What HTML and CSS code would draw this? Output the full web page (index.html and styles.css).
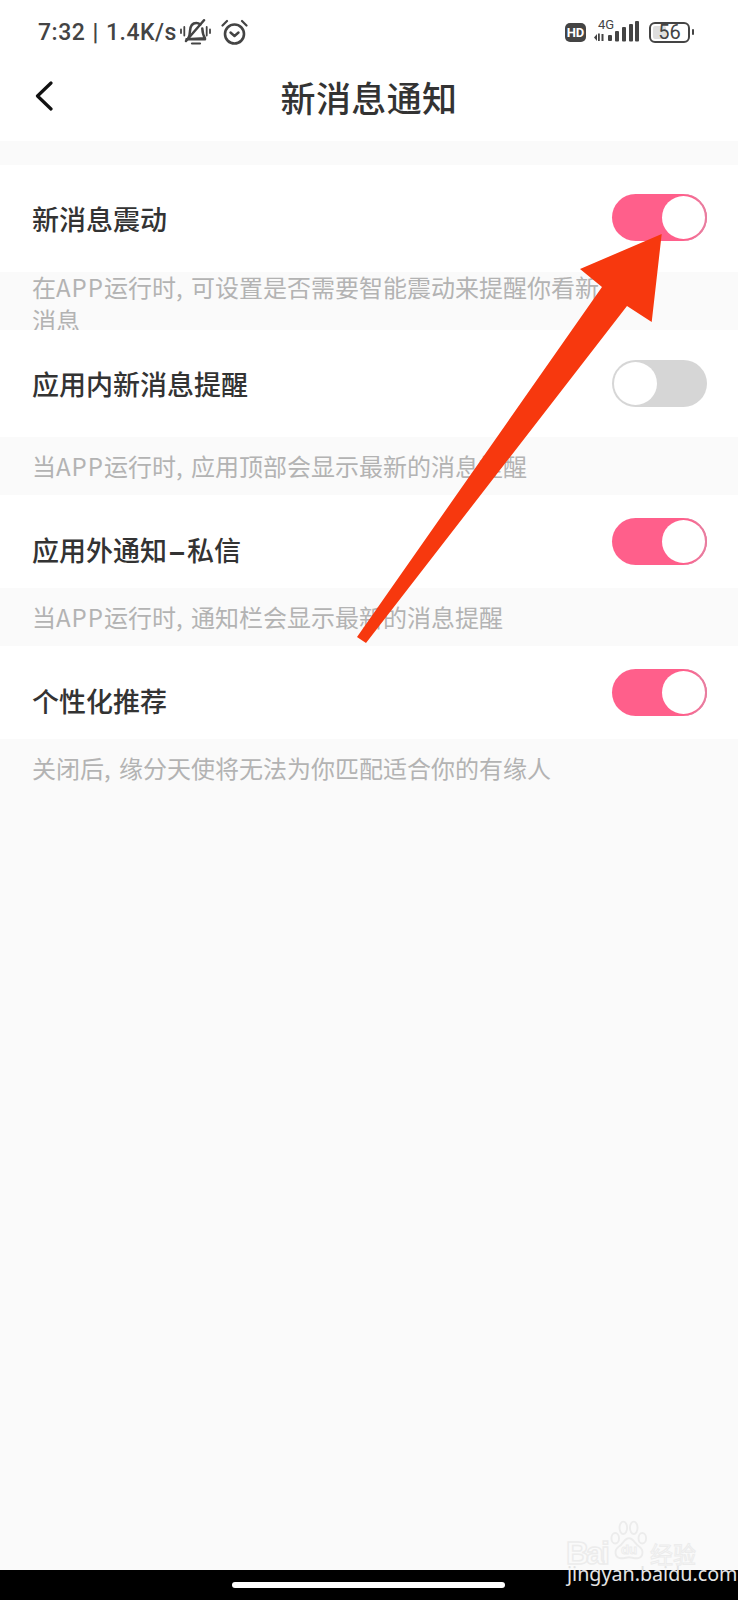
FILE: index.html
```html
<!DOCTYPE html>
<html lang="zh-CN">
<head>
<meta charset="utf-8">
<title>新消息通知</title>
<link rel="stylesheet" href="styles.css">
</head>
<body>
<div class="page">
  <header class="top">
    <div class="status">
      <div class="status-left">
        <span class="status-text">7:32 <b class="sep">|</b> 1.4K/s</span>
        <svg class="bell" viewBox="0 0 31 26" aria-hidden="true">
          <g fill="none" stroke="#444" stroke-width="2.500" stroke-linecap="round" stroke-linejoin="round">
            <path d="M8.500 19c1.200-2 1.300-4 1.500-7C10.300 7 12.800 4 16.300 4c1.600 0 3 .6 4 1.600M22.300 9.500c.2 3.500.5 6.500 2.700 9.800L6.500 20.200H25"/>
            <path d="M6 22 24 1.300"/>
            <path d="M12 24.500h8" stroke-width="2.200"/>
            <path d="M1 10.500v3.500M4.300 8v8.500M26.700 8v8.500M30 10.500v3.500" stroke-width="1.800"/>
          </g>
        </svg>
        <svg class="alarm" viewBox="0 0 27 27" aria-hidden="true">
          <g fill="none" stroke="#444" stroke-linecap="round" stroke-linejoin="round">
            <circle cx="13.500" cy="15" r="9.500" stroke-width="2.600"/>
            <path d="M9.500 13.500l4 3.500 4-3.500" stroke-width="2.400"/>
            <path d="M1.500 6.500 6 2M25.500 6.500 21 2" stroke-width="2.200"/>
          </g>
        </svg>
      </div>
      <div class="status-right">
        <span class="hd">HD</span>
        <div class="signal">
          <span class="net">4G</span>
          <svg class="bars" viewBox="0 0 45 21" aria-hidden="true">
            <g fill="#444">
              <path d="M0 16.500 3 13v7zM4 12.500h1.800V20H4z"/>
              <rect x="7.500" y="13" width="2" height="7"/>
              <rect x="14" y="14" width="4" height="6" rx="1"/>
              <rect x="21" y="10" width="4" height="10.500" rx="1"/>
              <rect x="28" y="6" width="4" height="14.500" rx="1"/>
              <rect x="35" y="3" width="4" height="17.500" rx="1"/>
              <rect x="41" y="0" width="4" height="20.500" rx="1"/>
            </g>
          </svg>
        </div>
        <div class="battery">
          <div class="battery-body"><span class="battery-fill"></span><span class="battery-num">56</span></div>
          <span class="battery-nub"></span>
        </div>
      </div>
    </div>
    <nav class="nav">
      <svg class="back" viewBox="0 0 18 30" aria-hidden="true">
        <path d="M16 2 2.500 15 16 28" fill="none" stroke="#111" stroke-width="3.200" stroke-linecap="round" stroke-linejoin="round"/>
      </svg>
      <h1 class="nav-title">新消息通知</h1>
    </nav>
  </header>

  <main class="content">
    <section class="row row-tall row-first">
      <h2 class="row-title title-first">新消息震动</h2>
      <span class="switch on"><span class="knob"></span></span>
    </section>
    <p class="note note-two"><span class="note-lines">在<span class="latin">APP</span>运行时, 可设置是否需要智能震动来提醒你看新消息</span></p>

    <section class="row row-tall">
      <h2 class="row-title">应用内新消息提醒</h2>
      <span class="switch off"><span class="knob"></span></span>
    </section>
    <p class="note">当<span class="latin">APP</span>运行时, 应用顶部会显示最新的消息提醒</p>

    <section class="row row-short">
      <h2 class="row-title title-low">应用外通知<span class="dash">-</span>私信</h2>
      <span class="switch on"><span class="knob"></span></span>
    </section>
    <p class="note">当<span class="latin">APP</span>运行时, 通知栏会显示最新的消息提醒</p>

    <section class="row row-short">
      <h2 class="row-title title-low">个性化推荐</h2>
      <span class="switch on"><span class="knob"></span></span>
    </section>
    <p class="note">关闭后, 缘分天使将无法为你匹配适合你的有缘人</p>
  </main>

  <footer class="home"><span class="home-bar"></span></footer>
</div>

<svg class="arrow" viewBox="0 0 738 1600" aria-hidden="true">
  <polygon fill="#f7380e" points="661.700,234 580,269 602,287 357,637 366,643 627,306 651.700,322"/>
</svg>

<div class="mark">
  <div class="mark-logo">
    <span class="mark-bai">Bai</span>
    <svg class="mark-paw" viewBox="0 0 40 48" aria-hidden="true">
      <g fill="none" stroke="#ececec" stroke-width="2">
        <ellipse cx="5.500" cy="19" rx="4" ry="5.500"/>
        <ellipse cx="14" cy="8" rx="4" ry="6.500"/>
        <ellipse cx="25" cy="8" rx="4" ry="6.500"/>
        <ellipse cx="34" cy="19" rx="4" ry="5.500"/>
        <path d="M20 19c-5 0-6 6-11 9-5 4-4 11 2 12 4 .5 6-1 9-1s5 1.500 9 1c6-1 7-8 2-12-5-3-6-9-11-9z"/>
      </g>
      <text class="mark-du" x="20" y="36">du</text>
    </svg>
    <span class="mark-jy">经验</span>
  </div>
  <div class="mark-url">jingyan.baidu.com</div>
</div>
</body>
</html>
```

FILE: styles.css
```css
* { box-sizing: border-box; }
html, body { margin: 0; padding: 0; }
body {
  position: relative;
  width: 738px;
  height: 1600px;
  overflow: hidden;
  background: #fafafa;
  font-family: "Noto Sans CJK SC", "Noto Sans", sans-serif;
}
.page { display: flex; flex-direction: column; height: 1600px; }

.top { background: #fff; height: 141px; flex: none; }
.status {
  height: 64px;
  display: flex;
  align-items: center;
  justify-content: space-between;
  padding: 0 44px 0 38px;
}
.status-left { display: flex; align-items: center; }
.status-text {
  font-family: Roboto, sans-serif;
  font-size: 23px;
  font-weight: 500;
  letter-spacing: .5px;
  word-spacing: 1px;
  color: #444;
  white-space: nowrap;
}
.sep { font-weight: 700; }
.bell { width: 31px; height: 26px; margin-left: 3px; }
.alarm { width: 27px; height: 27px; margin-left: 10px; }
.status-right { display: flex; align-items: center; }
.hd {
  width: 21px;
  height: 19px;
  border-radius: 5px;
  background: #444;
  color: #fff;
  font: 700 13px/19px Roboto, sans-serif;
  text-align: center;
}
.signal { width: 45px; height: 22px; margin-left: 8px; position: relative; }
.bars { display: block; width: 45px; height: 21px; }
.net {
  position: absolute;
  left: 4px;
  top: -3px;
  font: 400 13px/14px Roboto, sans-serif;
  color: #444;
}
.battery { display: flex; align-items: center; margin-left: 10px; }
.battery-body {
  position: relative;
  width: 41px;
  height: 21px;
  border: 2px solid #444;
  border-radius: 6px;
  display: flex;
  align-items: center;
  justify-content: center;
}
.battery-fill {
  position: absolute;
  left: 2px;
  top: 2px;
  bottom: 2px;
  width: 35%;
  background: #dedede;
  border-radius: 2px;
}
.battery-num {
  position: relative;
  font: 400 20px/17px Roboto, sans-serif;
  color: #444;
}
.battery-nub {
  width: 2px;
  height: 6px;
  margin-left: 2px;
  background: #444;
  border-radius: 1px;
}

.nav {
  position: relative;
  height: 77px;
  display: flex;
  align-items: center;
  justify-content: center;
  padding-bottom: 11px;
}
.back { position: absolute; left: 35px; top: 17px; width: 18px; height: 30px; }
.nav-title {
  margin: 0;
  font-size: 35px;
  line-height: 48px;
  letter-spacing: .4px;
  font-weight: 500;
  color: #333;
}

.content { flex: 1; padding-top: 24px; }
.row {
  background: #fff;
  display: flex;
  align-items: center;
  justify-content: space-between;
  padding: 0 31px 0 32px;
}
.row-tall { height: 107px; }
.row-short { height: 93px; }
.row-first { padding-bottom: 2px; }
.row-title {
  margin: 0;
  font-size: 27px;
  line-height: 38px;
  font-weight: 500;
  color: #333;
}
.title-first { padding-top: 2px; }
.title-low { padding-top: 17px; }
.dash {
  display: inline-block;
  width: 20px;
  text-align: center;
  font-weight: 700;
  transform: scaleX(1.9);
}

.switch {
  width: 95px;
  height: 47px;
  border-radius: 24px;
  padding: 2px;
  display: flex;
}
.switch.on { background: #ff5f8b; justify-content: flex-end; box-shadow: inset -2px 0 0 #e67ea0; }
.switch.off { background: #d6d6d6; justify-content: flex-start; }
.knob { width: 43px; height: 43px; border-radius: 50%; background: #fff; }

.note {
  margin: 0;
  height: 58px;
  overflow: hidden;
  padding: 12px 130px 0 32px;
  font-size: 24px;
  line-height: 33px;
  word-spacing: 3px;
  color: #b3b3b3;
}
.note-two { padding-top: 0; }
.note-lines { display: block; margin-top: -2px; }
.latin { letter-spacing: 1px; }

.home {
  height: 30px;
  flex: none;
  background: #000;
  padding-top: 12px;
  padding-left: 232px;
}
.home-bar { display: block; width: 273px; height: 6px; border-radius: 3px; background: #fff; }

.arrow { position: absolute; left: 0; top: 0; width: 738px; height: 1600px; pointer-events: none; }

.mark { position: absolute; left: 566px; top: 1520px; width: 135px; }
.mark-logo { display: flex; align-items: flex-end; height: 46px; }
.mark-bai {
  font: 700 32px/26px "Liberation Sans", sans-serif;
  letter-spacing: -3px;
  color: transparent;
  -webkit-text-stroke: 1.500px #ececec;
  width: 44px;
  flex: none;
}
.mark-paw { width: 38px; height: 46px; flex: none; }
.mark-du {
  font: 700 14px "Liberation Sans", sans-serif;
  fill: none;
  stroke: #ececec;
  stroke-width: 1;
  text-anchor: middle;
}
.mark-jy {
  margin-left: 2px;
  font-size: 23px;
  line-height: 26px;
  color: transparent;
  -webkit-text-stroke: 1px #ececec;
  white-space: nowrap;
}
.mark-url {
  margin-left: 1px;
  font: 400 19.700px/16px "Noto Sans", sans-serif;
  color: #e4e4e4;
  white-space: nowrap;
}
```
